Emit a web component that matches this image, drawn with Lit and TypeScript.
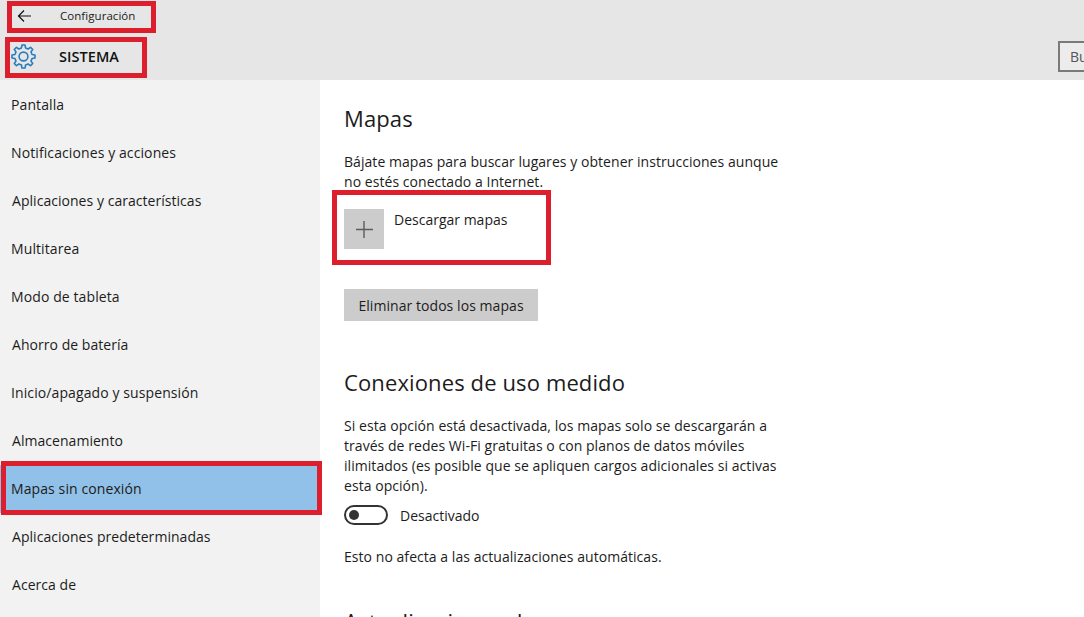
import { LitElement, html, css, svg } from "lit";
import { customElement } from "lit/decorators.js";

const MENU = [
  "Pantalla",
  "Notificaciones y acciones",
  "Aplicaciones y características",
  "Multitarea",
  "Modo de tableta",
  "Ahorro de batería",
  "Inicio/apagado y suspensión",
  "Almacenamiento",
  "Mapas sin conexión",
  "Aplicaciones predeterminadas",
  "Acerca de",
];

function gearPath(cx: number, cy: number, teeth: number, ro: number, ri: number): string {
  const pts: string[] = [];
  const step = (Math.PI * 2) / teeth;
  for (let i = 0; i < teeth; i++) {
    const a = i * step - Math.PI / 2;
    const seq: [number, number][] = [
      [a - step * 0.3, ri],
      [a - step * 0.17, ro],
      [a + step * 0.17, ro],
      [a + step * 0.3, ri],
    ];
    for (const [t, r] of seq) {
      pts.push(`${(cx + r * Math.cos(t)).toFixed(2)} ${(cy + r * Math.sin(t)).toFixed(2)}`);
    }
  }
  return "M" + pts.join("L") + "Z";
}

@customElement("app-root")
export class AppRoot extends LitElement {
  static styles = css`
    :host {
      display: block;
      position: relative;
      width: 1084px;
      height: 617px;
      overflow: hidden;
      background: #fff;
      font-family: "Open Sans", "Noto Sans", sans-serif;
      font-size: 14px;
      color: #1c1c1c;
    }
    .header {
      height: 80px;
      background: #e6e6e6;
      display: flex;
      flex-direction: column;
      box-sizing: border-box;
      padding-top: 4px;
    }
    .top {
      display: flex;
      align-items: center;
      height: 24px;
      padding-left: 17px;
      font-size: 11.5px;
      letter-spacing: 0.05px;
    }
    .top span {
      margin-left: 28px;
      margin-top: -2px;
    }
    .second {
      display: flex;
      align-items: center;
      height: 40px;
      margin-top: 8px;
      padding-left: 11px;
    }
    .sys {
      margin-left: 23px;
      font-size: 14.5px;
      font-weight: 600;
      letter-spacing: 0.05px;
      color: #111;
    }
    .search {
      margin-left: auto;
      margin-right: -100px;
      width: 126px;
      height: 31px;
      box-sizing: border-box;
      border: 2px solid #7a7a7a;
      background: #ececec;
      padding-left: 10px;
      line-height: 27px;
      color: #555;
    }
    .body {
      display: flex;
      height: 537px;
    }
    .side {
      width: 320px;
      flex: none;
      background: #f2f2f2;
      padding-top: 1px;
    }
    .item {
      height: 48px;
      line-height: 47px;
      padding-left: 11px;
      letter-spacing: 0.1px;
    }
    .item.a {
      padding-left: 12px;
      letter-spacing: 0.04px;
    }
    .item.on {
      background: #91c0e8;
    }
    .main {
      padding-left: 24px;
      width: 460px;
    }
    h2 {
      margin: 0;
      font-size: 22px;
      font-weight: 400;
      line-height: 30px;
      letter-spacing: 0.12px;
    }
    .first {
      margin-top: 23px;
    }
    p {
      margin: 0;
      line-height: 20px;
      letter-spacing: 0.05px;
    }
    .lead {
      margin-top: 19px;
    }
    .dl {
      display: flex;
      margin-top: 17px;
    }
    .tile {
      width: 40px;
      height: 40px;
      background: #cccccc;
      display: flex;
      align-items: center;
      justify-content: center;
    }
    .dl span {
      margin-left: 10px;
      line-height: 22px;
    }
    .btn {
      display: block;
      margin-top: 40px;
      width: 194px;
      height: 32px;
      border: 0;
      padding: 2px 0 0;
      background: #cccccc;
      font: inherit;
      color: inherit;
      letter-spacing: 0.06px;
      line-height: 30px;
      text-align: center;
    }
    .second-head {
      margin-top: 46px;
    }
    .info {
      margin-top: 19px;
    }
    .toggle-row {
      display: flex;
      align-items: center;
      margin-top: 9px;
      height: 20px;
    }
    .toggle {
      width: 44px;
      height: 20px;
      box-sizing: border-box;
      border: 2px solid #333;
      border-radius: 10px;
      display: flex;
      align-items: center;
      padding-left: 3px;
    }
    .knob {
      width: 10px;
      height: 10px;
      border-radius: 50%;
      background: #333;
    }
    .toggle-row span {
      margin-left: 12px;
    }
    .note {
      margin-top: 22px;
    }
    .third {
      margin-top: 39px;
    }
    .mark {
      position: absolute;
      box-sizing: border-box;
      border: 5px solid #dd1f2d;
      pointer-events: none;
    }
    .m1 { left: 7px; top: 1px; width: 149px; height: 32px; }
    .m2 { left: 5px; top: 37px; width: 142px; height: 41px; }
    .m3 { left: 332px; top: 190px; width: 219px; height: 75px; }
    .m4 { left: 1px; top: 461px; width: 321px; height: 54px; }
  `;

  render() {
    return html`
      <div class="header">
        <div class="top">
          <svg width="15" height="14" viewBox="0 0 15 14" fill="none" stroke="#111" stroke-width="1.2">
            <path d="M14 7H1.5M7 1.5 1.5 7 7 12.5" />
          </svg>
          <span>Configuración</span>
        </div>
        <div class="second">
          <svg width="25" height="25" viewBox="0 0 25 25" fill="none" stroke="#2b7cbd" stroke-width="1.6">
            ${svg`<path d=${gearPath(12.5, 12.5, 8, 11.6, 8.8)} stroke-linejoin="round" /><circle cx="12.5" cy="12.5" r="4.4" />`}
          </svg>
          <div class="sys">SISTEMA</div>
          <div class="search">Buscar</div>
        </div>
      </div>
      <div class="body">
        <nav class="side">
          ${MENU.map(
            (m) =>
              html`<div class="item ${m === "Mapas sin conexión" ? "on" : ""} ${m[0] === "A" ? "a" : ""}">${m}</div>`
          )}
        </nav>
        <main class="main">
          <h2 class="first">Mapas</h2>
          <p class="lead">
            Bájate mapas para buscar lugares y obtener instrucciones aunque<br />no estés conectado a Internet.
          </p>
          <div class="dl">
            <div class="tile">
              <svg width="17" height="17" viewBox="0 0 17 17" stroke="#5c5c5c" stroke-width="1.4">
                <path d="M8 0v17M0 8.5h17" />
              </svg>
            </div>
            <span>Descargar mapas</span>
          </div>
          <button class="btn">Eliminar todos los mapas</button>
          <h2 class="second-head">Conexiones de uso medido</h2>
          <p class="info">
            Si esta opción está desactivada, los mapas solo se descargarán a<br />través de redes Wi-Fi gratuitas o con planos de datos móviles<br />ilimitados (es posible que se apliquen cargos adicionales si activas<br />esta opción).
          </p>
          <div class="toggle-row">
            <div class="toggle"><div class="knob"></div></div>
            <span>Desactivado</span>
          </div>
          <p class="note">Esto no afecta a las actualizaciones automáticas.</p>
          <h2 class="third">Actualizaciones de mapas</h2>
        </main>
      </div>
      <div class="mark m1"></div>
      <div class="mark m2"></div>
      <div class="mark m3"></div>
      <div class="mark m4"></div>
    `;
  }
}
